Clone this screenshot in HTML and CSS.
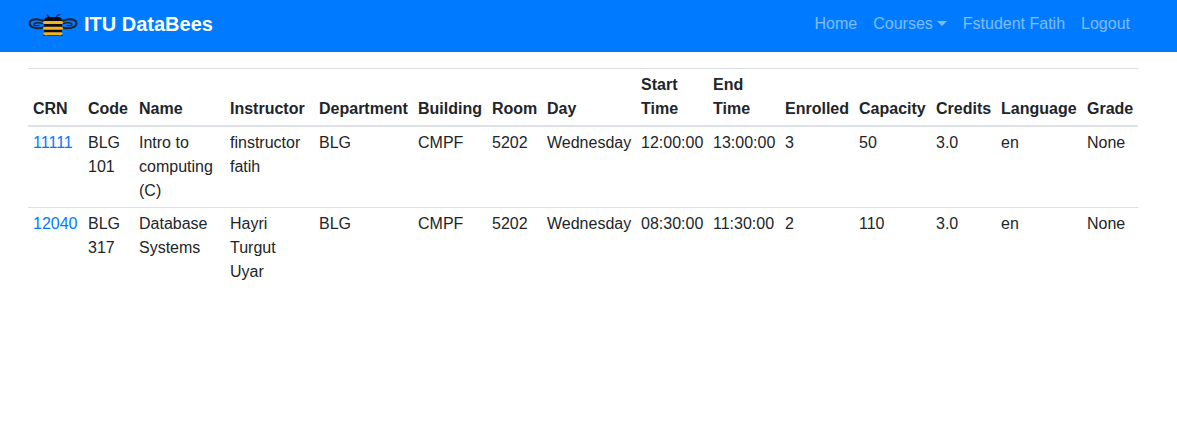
FILE: index.html
```html
<!DOCTYPE html>
<html lang="en">
<head>
<meta charset="utf-8">
<title>ITU DataBees</title>
<link rel="stylesheet" href="styles.css">
</head>
<body>
<nav class="navbar">
  <a class="brand" href="#">
    <svg class="bee" width="50" height="24" viewBox="0 0 50 24" aria-hidden="true">
      <g fill="none" stroke="#1b2433" stroke-linecap="round">
        <path stroke-width="2" d="M16 9C10 6.500 3.500 6.500 1.800 10C0.500 14 6 18 16 15.500"/>
        <path stroke-width="1.300" d="M16 12C12 10.300 7.500 10.300 6 12C5.500 13.500 8 14 11 13.500"/>
        <path stroke-width="2" d="M34 9C40 6.500 46.500 6.500 48.200 10C49.500 14 44 18 34 15.500"/>
        <path stroke-width="1.300" d="M34 12C38 10.300 42.500 10.300 44 12C44.500 13.500 42 14 39 13.500"/>
        <path stroke-width="1.200" d="M21.500 5.500L19 3M28.500 5L30 3L32 2.800"/>
        <path stroke-width="1.200" d="M18 21.500L16 23.500M32 21.500L34 23.500"/>
      </g>
      <rect x="16" y="5" width="18" height="18.500" rx="4" fill="#0c0c10"/>
      <rect x="15" y="9" width="20" height="3" rx="1.500" fill="#f3b41f"/>
      <rect x="15" y="14.700" width="20" height="3" rx="1.500" fill="#f3b41f"/>
      <rect x="15.500" y="20.200" width="19" height="2.800" rx="1.400" fill="#f3b41f"/>
    </svg>
    <span>ITU DataBees</span>
  </a>
  <ul class="nav">
    <li><a href="#">Home</a></li>
    <li><a href="#" class="caret">Courses</a></li>
    <li><a href="#">Fstudent Fatih</a></li>
    <li><a href="#">Logout</a></li>
  </ul>
</nav>
<main class="container">
  <table class="table">
    <colgroup>
      <col class="c-crn"><col class="c-code"><col class="c-name"><col class="c-instructor"><col class="c-department"><col class="c-building"><col class="c-room"><col class="c-day"><col class="c-time"><col class="c-time"><col class="c-enrolled"><col class="c-capacity"><col class="c-credits"><col class="c-language"><col class="c-grade">
    </colgroup>
    <thead>
      <tr>
        <th>CRN</th><th>Code</th><th>Name</th><th>Instructor</th><th>Department</th><th>Building</th><th>Room</th><th>Day</th><th>Start Time</th><th>End Time</th><th>Enrolled</th><th>Capacity</th><th>Credits</th><th>Language</th><th>Grade</th>
      </tr>
    </thead>
    <tbody>
      <tr>
        <td><a href="#">11111</a></td><td>BLG 101</td><td>Intro to computing (C)</td><td>finstructor fatih</td><td>BLG</td><td>CMPF</td><td>5202</td><td>Wednesday</td><td>12:00:00</td><td>13:00:00</td><td>3</td><td>50</td><td>3.0</td><td>en</td><td>None</td>
      </tr>
      <tr>
        <td><a href="#">12040</a></td><td>BLG 317</td><td>Database Systems</td><td>Hayri Turgut Uyar</td><td>BLG</td><td>CMPF</td><td>5202</td><td>Wednesday</td><td>08:30:00</td><td>11:30:00</td><td>2</td><td>110</td><td>3.0</td><td>en</td><td>None</td>
      </tr>
    </tbody>
  </table>
</main>
</body>
</html>
```
FILE: styles.css
```css
* { box-sizing: border-box; }
body {
  margin: 0;
  font-family: "Liberation Sans", Arial, sans-serif;
  font-size: 16px;
  line-height: 1.5;
  color: #212529;
  background: #fff;
}
a { text-decoration: none; }
.navbar {
  display: flex;
  align-items: center;
  justify-content: space-between;
  height: 52px;
  padding: 0 47px 4px 28px;
  background: #007bff;
}
.brand {
  display: flex;
  align-items: center;
  gap: 6px;
  color: #fff;
  font-size: 20px;
  font-weight: 700;
}
.bee { display: block; }
.nav {
  display: flex;
  gap: 16px;
  margin: 0;
  padding: 0;
  list-style: none;
}
.nav a { color: rgba(255,255,255,.5); }
.caret::after {
  content: "";
  display: inline-block;
  margin-left: 4px;
  vertical-align: 3px;
  border-top: 5px solid;
  border-left: 5px solid transparent;
  border-right: 5px solid transparent;
}
.container { padding: 16px 39px 0 28px; }
.table {
  width: 100%;
  table-layout: fixed;
  border-collapse: collapse;
  color: #212529;
}
.c-crn { width: 55px; }
.c-code { width: 51px; }
.c-name { width: 91px; }
.c-instructor { width: 89px; }
.c-department { width: 99px; }
.c-building { width: 74px; }
.c-room { width: 55px; }
.c-day { width: 94px; }
.c-time { width: 72px; }
.c-enrolled { width: 74px; }
.c-capacity { width: 77px; }
.c-credits { width: 65px; }
.c-language { width: 86px; }
.c-grade { width: 56px; }
.table th, .table td {
  padding: 4px 5px;
  text-align: left;
  vertical-align: top;
  border-top: 1px solid #dee2e6;
}
.table thead th {
  vertical-align: bottom;
  border-bottom: 2px solid #dee2e6;
  font-weight: 700;
}
.table td a { color: #007bff; }
```
